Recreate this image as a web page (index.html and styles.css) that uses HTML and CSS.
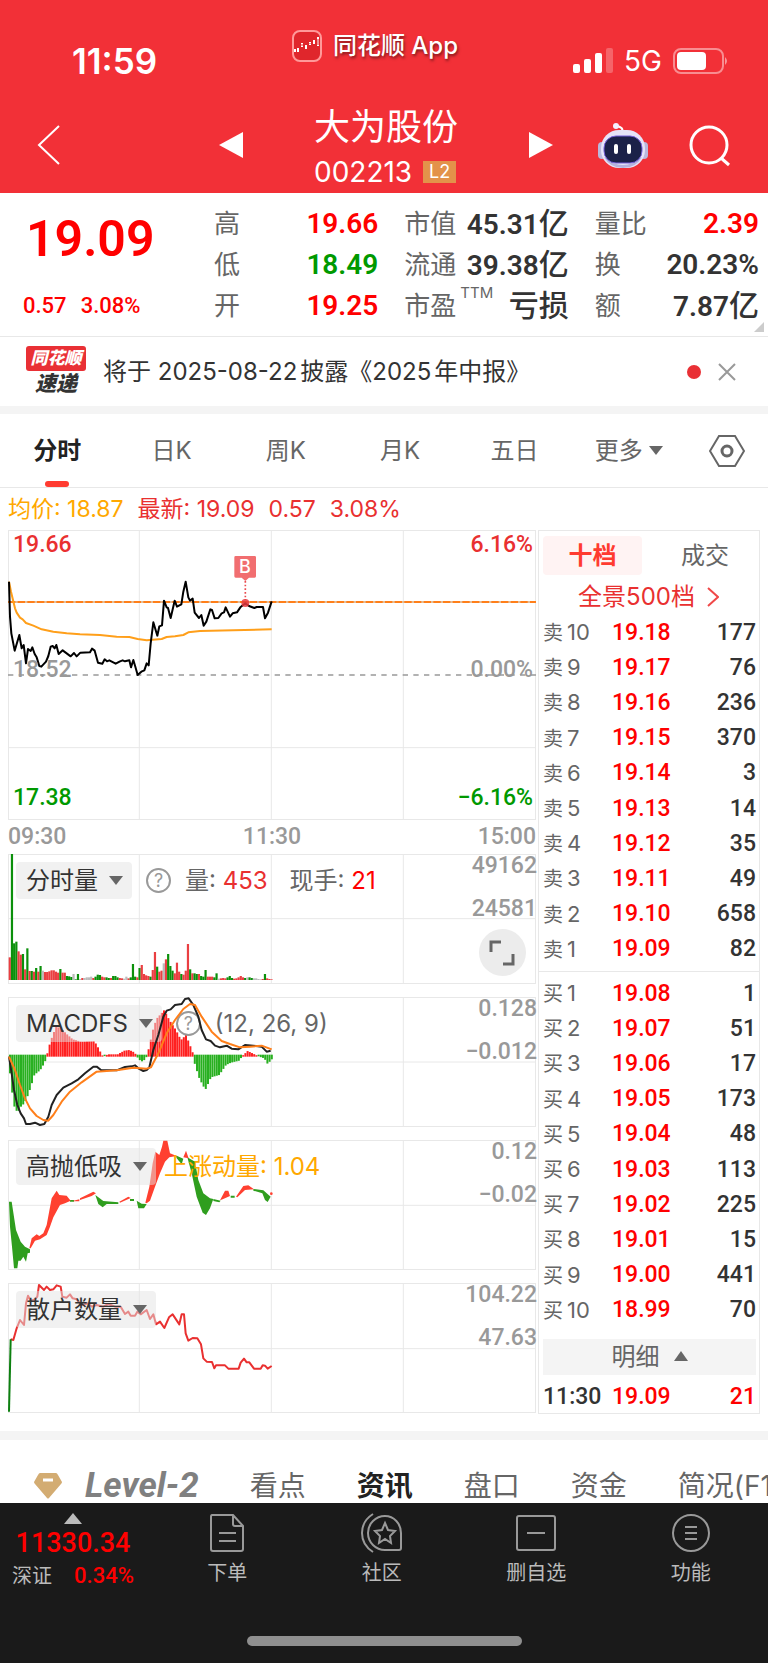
FILE: index.html
```
<!DOCTYPE html>
<html lang="zh-CN">
<head>
    <meta charset="UTF-8">
    <meta name="viewport" content="width=device-width, initial-scale=1.0">
    <title>大为股份 002213</title>
    <link rel="stylesheet" href="styles.css">
</head>
<body>
    <header class="top">
        <div class="status">
            <div class="clock">11:59</div>
            <div class="app-name">
                <svg width="30" height="32" viewBox="0 0 30 32">
                    <rect x="1" y="1" width="28" height="30" rx="7" fill="#e0262c" stroke="#f99" stroke-width="2"/>
                    <path d="M3 19v3M6 18v4M10 13v4M14 15v4M18 12v3M22 10v4M26 7v9" stroke="#fff" stroke-width="2"/>
                    <path d="M10 14v2M18 13v1M26 9v6" stroke="#e0262c" stroke-width="1"/>
                </svg>
                <span>同花顺 App</span>
            </div>
            <div class="signal">
                <svg width="40" height="26" viewBox="0 0 40 26">
                    <rect x="0" y="16" width="7" height="9" rx="2" fill="#fff"/>
                    <rect x="11" y="11" width="7" height="14" rx="2" fill="#fff"/>
                    <rect x="22" y="5" width="7" height="20" rx="2" fill="#fff"/>
                    <rect x="33" y="0" width="7" height="25" rx="2" fill="#fff" opacity=".25"/>
                </svg>
                <span>5G</span>
                <svg width="56" height="26" viewBox="0 0 56 26">
                    <rect x="1" y="1" width="49" height="24" rx="7" fill="none" stroke="#fff" stroke-width="2" opacity=".45"/>
                    <rect x="4" y="4" width="29" height="18" rx="4" fill="#fff"/>
                    <path d="M52 9q4 4 0 8z" fill="#fff" opacity=".5"/>
                </svg>
            </div>
        </div>
        <nav class="nav">
            <div class="nav-left">
                <button class="icon-btn" aria-label="返回">
                    <svg width="24" height="42" viewBox="0 0 24 42"><path d="M22 2L2 21L22 40" fill="none" stroke="#fff" stroke-width="2"/></svg>
                </button>
            </div>
            <div class="nav-mid">
                <button class="icon-btn" aria-label="上一只">
                    <svg width="24" height="26" viewBox="0 0 24 26"><path d="M24 0v26L0 13z" fill="#fff"/></svg>
                </button>
                <div class="stock">
                    <h1>大为股份</h1>
                    <p>002213 <span class="l2">L2</span></p>
                </div>
                <button class="icon-btn" aria-label="下一只">
                    <svg width="24" height="26" viewBox="0 0 24 26"><path d="M0 0v26l24-13z" fill="#fff"/></svg>
                </button>
            </div>
            <div class="nav-right">
                <button class="icon-btn" aria-label="智能助手">
                    <svg width="50" height="46" viewBox="0 0 50 46">
                        <path d="M24 9q2-5-6-6" fill="none" stroke="#fff" stroke-width="2"/>
                        <circle cx="18" cy="3" r="3" fill="#f4f0ff"/>
                        <rect x="0" y="19" width="8" height="17" rx="4" fill="#b9b8dc"/>
                        <rect x="42" y="19" width="8" height="17" rx="4" fill="#b9b8dc"/>
                        <rect x="3" y="7" width="44" height="38" rx="18" fill="#e6e4f8"/>
                        <path d="M6 34q19 16 38 0q-6 11-19 11T6 34z" fill="#b5b2dd"/>
                        <rect x="6" y="13" width="38" height="27" rx="12" fill="#1b2148" stroke="#7560d8" stroke-width="1"/>
                        <rect x="16" y="21" width="4" height="10" rx="2" fill="#fff"/>
                        <rect x="29" y="21" width="4" height="10" rx="2" fill="#fff"/>
                    </svg>
                </button>
                <button class="icon-btn" aria-label="搜索">
                    <svg width="42" height="42" viewBox="0 0 42 42"><circle cx="20" cy="20" r="18" fill="none" stroke="#fff" stroke-width="3"/><path d="M32 33l8 7" stroke="#fff" stroke-width="3"/></svg>
                </button>
            </div>
        </nav>
    </header>

    <section class="quote">
        <div class="price">
            <div class="last">19.09</div>
            <div class="change"><span>0.57</span><span>3.08%</span></div>
        </div>
        <dl class="stats">
            <div><dt>高</dt><dd class="up">19.66</dd></div>
            <div><dt>市值</dt><dd>45.31<i>亿</i></dd></div>
            <div><dt>量比</dt><dd class="up">2.39</dd></div>
            <div><dt>低</dt><dd class="down">18.49</dd></div>
            <div><dt>流通</dt><dd>39.38<i>亿</i></dd></div>
            <div><dt>换</dt><dd>20.23%</dd></div>
            <div><dt>开</dt><dd class="up">19.25</dd></div>
            <div><dt>市盈<sup>TTM</sup></dt><dd><i>亏损</i></dd></div>
            <div><dt>额</dt><dd>7.87<i>亿</i></dd></div>
        </dl>
        <span class="corner"></span>
    </section>

    <section class="news">
        <div class="news-logo"><b>同花顺</b><em>速递</em></div>
        <a href="#" class="news-text">将于 2025-08-22披露《2025年中报》</a>
        <span class="dot"></span>
        <button class="icon-btn" aria-label="关闭">
            <svg width="18" height="18" viewBox="0 0 18 18"><path d="M1 1l16 16M17 1L1 17" stroke="#999" stroke-width="2"/></svg>
        </button>
    </section>

    <nav class="periods">
        <button class="active">分时</button>
        <button>日K</button>
        <button>周K</button>
        <button>月K</button>
        <button>五日</button>
        <button>更多<span class="caret"></span></button>
        <button aria-label="设置">
            <svg width="36" height="32" viewBox="0 0 36 32"><path d="M10 1h16l9 15l-9 15H10L1 16z" fill="none" stroke="#666" stroke-width="2"/><circle cx="18" cy="16" r="5" fill="none" stroke="#666" stroke-width="3"/></svg>
        </button>
    </nav>

    <div class="summary">
        <span class="avg">均价: 18.87</span>
        <span>最新: 19.09</span>
        <span>0.57</span>
        <span>3.08%</span>
    </div>

    <main class="market">
        <div class="charts">
            <figure class="chart main-chart">
                <svg viewBox="24 30 1584 870" preserveAspectRatio="none">
                    <path class="grid" d="M418 30V900M814 30V900M1210 30V900M24 683H1608"/>
                    <path d="M24 465H1608" stroke="#999" stroke-width="4" stroke-dasharray="16 16"/>
                    <path d="M24 246H1608" stroke="#d9a878" stroke-width="4"/>
                    <path d="M24 246H1608" stroke="#ff7f1a" stroke-width="6" stroke-dasharray="22 7"/>
                    <polyline class="line" stroke="#ff9f1a" points="27,185 33,215 45,265 50,278 60,293 68,298 78,309 100,317 125,328 160,335 200,340 240,343 300,345 350,350 388,351 413,357 440,361 485,357 500,351 525,349 550,345 565,337 600,333 700,331 815,328"/>
                    <polyline class="line" stroke="#000" points="27,185 30,290 34,340 44,392 58,345 65,385 71,375 78,430 84,387 92,393 97,382 104,402 110,412 118,438 124,440 138,425 145,408 152,380 158,378 164,385 169,375 176,402 188,391 200,400 212,409 222,399 230,409 241,398 270,397 276,386 284,392 294,428 307,431 314,418 321,424 328,421 347,431 360,424 368,421 375,424 388,421 393,442 400,420 406,440 413,465 424,455 433,451 440,430 446,436 452,370 460,307 472,347 478,319 486,316 492,242 500,262 504,264 512,294 524,242 531,260 544,253 550,215 557,185 565,232 570,242 578,236 584,278 597,294 604,285 611,317 619,305 631,268 636,270 644,295 655,294 665,280 672,277 677,262 690,290 698,280 711,277 721,262 736,250 747,258 763,264 770,261 789,261 795,295 804,278 815,244"/>
                    <path d="M736 183V240" stroke="#ea4b4f" stroke-width="5" stroke-dasharray="5 6"/>
                    <circle cx="736" cy="249" r="12" fill="#e83a3f" opacity=".85"/>
                    <path d="M707 108h57q4 0 4 4v57q0 4-4 4h-17l-11 10l-11-10h-18q-4 0-4-4v-57q0-4 4-4z" fill="#f16e70"/>
                    <text x="735" y="159" text-anchor="middle" class="mark">B</text>
                </svg>
                <span class="tag top-left up-soft">19.66</span>
                <span class="tag top-right up-soft">6.16%</span>
                <span class="tag mid-left">18.52</span>
                <span class="tag mid-right">0.00%</span>
                <span class="tag low-left down">17.38</span>
                <span class="tag low-right down">−6.16%</span>
            </figure>
            <div class="times"><span>09:30</span><span>11:30</span><span>15:00</span></div>

            <figure class="chart sub">
                <svg viewBox="24 42 1584 390" preserveAspectRatio="none">
                    <path class="grid" d="M418 42V432M814 42V432M1210 42V432M24 236H1608"/>
                    <g id="volume"></g>
                </svg>
                <figcaption>
                    <button class="chip">分时量<span class="caret"></span></button>
                    <span class="help">?</span>
                    <span class="cap">量: <b class="up-soft">453</b></span>
                    <span class="cap wide">现手: <b class="up">21</b></span>
                </figcaption>
                <span class="scale">49162</span>
                <span class="scale half">24581</span>
                <button class="expand" aria-label="全屏">
                    <svg width="26" height="26" viewBox="0 0 26 26"><path d="M12 2H2V12M14 24H24V14" fill="none" stroke="#666" stroke-width="3"/></svg>
                </button>
            </figure>

            <figure class="chart sub">
                <svg viewBox="24 471 1584 390" preserveAspectRatio="none">
                    <path class="grid" d="M418 471V861M814 471V861M1210 471V861M24 666H1608"/>
                    <g id="macd"></g>
                </svg>
                <figcaption>
                    <button class="chip">MACDFS<span class="caret"></span></button>
                    <span class="help">?</span>
                    <span class="cap">(12, 26, 9)</span>
                </figcaption>
                <svg class="over" viewBox="24 471 1584 390" preserveAspectRatio="none">
                    <polyline class="line" stroke="#222" points="27,650 35,700 42,750 52,795 62,820 72,835 78,852 90,852 105,848 120,855 133,852 145,830 155,795 170,765 190,743 215,730 235,718 255,700 280,680 290,680 303,690 350,691 375,681 395,679 405,676 415,685 430,693 440,690 448,682 460,630 475,585 490,530 500,512 512,508 525,495 545,492 555,477 566,475 580,495 595,530 605,570 618,598 632,603 645,617 660,622 680,617 695,626 715,628 735,615 760,617 785,620 800,635 812,632"/>
                    <polyline class="line" stroke="#ff7f1a" points="27,650 45,690 60,735 75,775 90,805 110,828 130,840 145,842 160,825 185,785 210,755 245,727 290,695 350,691 400,683 440,686 453,682 475,640 500,580 525,540 550,507 570,492 585,495 605,530 635,575 665,603 690,612 720,622 750,620 785,617 815,628"/>
                </svg>
                <span class="scale">0.128</span>
                <span class="scale half">−0.012</span>
            </figure>

            <figure class="chart sub">
                <svg viewBox="24 30 1584 390" preserveAspectRatio="none">
                    <path class="grid" d="M418 30V420M814 30V420M1210 30V420M24 226H1608"/>
                    <g fill="#2f9e1e">
                        <path d="M27 215H35L48 300L62 335L75 350L90 358V368L83 370L78 395L70 380L62 392L55 392L52 415H42L36 350L30 290z"/>
                        <path d="M286 195L310 213L355 217V222H320L308 232L295 222z"/>
                        <path d="M410 212L425 221L440 222L432 235H415z"/>
                        <path d="M525 75L550 86L545 103L530 85z"/>
                        <path d="M562 82L585 95L595 150L610 190L630 205L640 207L630 235L618 255L608 248L590 200L575 130z"/>
                        <path d="M640 207L662 212L658 217L640 213zM692 197H704V203H692zM210 210H222V215H210zM390 207H402V213H390z"/>
                        <path d="M760 177L790 181L812 200L803 216L795 210L787 190L760 182z"/>
                    </g>
                    <g fill="#ff4030">
                        <path d="M88 355L95 325L110 313L118 318L130 310L140 285L155 205L170 182L178 195L200 197L212 212L195 220L180 225L160 262L150 290L140 315L120 328L105 332L92 355z"/>
                        <path d="M220 212L238 208V214H220zM240 205L280 185L288 190L275 198L240 210z"/>
                        <path d="M358 215L385 200L392 204L360 218z"/>
                        <path d="M436 218L448 170L458 100L466 65L478 75L486 50L490 32H502L510 70L530 78L508 82L495 95L480 130L465 170L450 212L440 220z"/>
                        <path d="M550 82L558 62L566 85zM660 211L675 182H685L690 198L668 208z"/>
                        <path d="M708 200L730 168L745 166L762 178L735 180L712 202z"/>
                        <circle cx="814" cy="191" r="4"/>
                    </g>
                </svg>
                <figcaption>
                    <button class="chip">高抛低吸<span class="caret"></span></button>
                    <span class="cap avg tight">上涨动量: 1.04</span>
                </figcaption>
                <span class="scale">0.12</span>
                <span class="scale half">−0.02</span>
            </figure>

            <figure class="chart sub">
                <svg viewBox="24 459 1584 390" preserveAspectRatio="none">
                    <path class="grid" d="M418 459V849M814 459V849M1210 459V849M24 656H1608"/>
                    <polyline class="line" stroke="#e93030" points="32,628 40,630 50,595 60,570 72,585 78,520 84,497 92,512 105,508 112,500 117,465 132,480 140,470 150,480 160,478 170,466 182,470 187,500 200,503 210,493 218,505 230,508 245,525 265,520 275,530 290,525 310,530 325,522 345,530 362,530 375,552 385,545 392,557 405,557 412,545 422,553 440,540 450,567 460,553 468,583 480,575 493,594 507,562 518,553 538,583 545,553 552,553 557,610 565,632 578,624 592,625 603,643 610,685 620,695 636,696 643,715 648,706 675,706 685,716 716,716 722,698 732,686 740,697 748,697 762,716 782,716 788,706 795,707 803,716 815,708"/>
                    <path class="line" stroke="#0d8010" d="M27 845L32 628"/>
                </svg>
                <figcaption>
                    <button class="chip">散户数量<span class="caret"></span></button>
                </figcaption>
                <span class="scale">104.22</span>
                <span class="scale half">47.63</span>
            </figure>
        </div>

        <aside class="book">
            <div class="book-tabs">
                <button class="active">十档</button>
                <button>成交</button>
            </div>
            <a href="#" class="depth">全景500档
                <svg width="12" height="20" viewBox="0 0 12 20"><path d="M1 1l10 9l-10 9" fill="none" stroke="#f04848" stroke-width="2"/></svg>
            </a>
            <table>
                <tr><th>卖<span>10</span></th><td>19.18</td><td>177</td></tr>
                <tr><th>卖<span>9</span></th><td>19.17</td><td>76</td></tr>
                <tr><th>卖<span>8</span></th><td>19.16</td><td>236</td></tr>
                <tr><th>卖<span>7</span></th><td>19.15</td><td>370</td></tr>
                <tr><th>卖<span>6</span></th><td>19.14</td><td>3</td></tr>
                <tr><th>卖<span>5</span></th><td>19.13</td><td>14</td></tr>
                <tr><th>卖<span>4</span></th><td>19.12</td><td>35</td></tr>
                <tr><th>卖<span>3</span></th><td>19.11</td><td>49</td></tr>
                <tr><th>卖<span>2</span></th><td>19.10</td><td>658</td></tr>
                <tr><th>卖<span>1</span></th><td>19.09</td><td>82</td></tr>
            </table>
            <hr>
            <table>
                <tr><th>买<span>1</span></th><td>19.08</td><td>1</td></tr>
                <tr><th>买<span>2</span></th><td>19.07</td><td>51</td></tr>
                <tr><th>买<span>3</span></th><td>19.06</td><td>17</td></tr>
                <tr><th>买<span>4</span></th><td>19.05</td><td>173</td></tr>
                <tr><th>买<span>5</span></th><td>19.04</td><td>48</td></tr>
                <tr><th>买<span>6</span></th><td>19.03</td><td>113</td></tr>
                <tr><th>买<span>7</span></th><td>19.02</td><td>225</td></tr>
                <tr><th>买<span>8</span></th><td>19.01</td><td>15</td></tr>
                <tr><th>买<span>9</span></th><td>19.00</td><td>441</td></tr>
                <tr><th>买<span>10</span></th><td>18.99</td><td>70</td></tr>
            </table>
            <button class="detail">明细<span class="caret rise"></span></button>
            <div class="tick"><span>11:30</span><span class="up">19.09</span><span class="up">21</span></div>
        </aside>
    </main>

    <nav class="sections">
        <a href="#" class="level">
            <svg width="28" height="26" viewBox="0 0 28 26"><path d="M6 0h16q1 0 2 2l4 7q0 1-1 2L15 25q-1 1-2 0L1 11q-1-1-1-2l4-7q1-2 2-2z" fill="#d3ac72"/><path d="M9 7h10" stroke="#fff" stroke-width="3"/></svg>
            <span>Level-2</span>
        </a>
        <a href="#">看点</a>
        <a href="#" class="active">资讯</a>
        <a href="#">盘口</a>
        <a href="#">资金</a>
        <a href="#">简况(F10)</a>
    </nav>

    <footer class="bottom">
        <div class="bar">
            <div class="index">
                <span class="caret rise"></span>
                <strong>11330.34</strong>
                <div><span>深证</span><b>0.34%</b></div>
            </div>
            <button>
                <svg width="36" height="40" viewBox="0 0 36 40"><path d="M3 2H24L34 13V36q0 2-2 2H4q-2 0-2-2V4q0-2 1-2zM24 2V11q0 2 2 2H34M10 20H27M10 28H27"/></svg>
                下单
            </button>
            <button>
                <svg width="42" height="40" viewBox="0 0 42 40"><path d="M24 3A17 17 0 0 0 24 37H38q2 0 2-2V20A16 17 0 0 0 24 3zM12 1Q1 8 1 20T12 39M24 10l3 7l7 1l-5 5l1 7l-6-4l-6 4l1-7l-5-5l7-1z"/></svg>
                社区
            </button>
            <button>
                <svg width="40" height="40" viewBox="0 0 40 40"><rect x="1" y="3" width="38" height="34" rx="2"/><path d="M11 20H29"/></svg>
                删自选
            </button>
            <button>
                <svg width="40" height="40" viewBox="0 0 40 40"><circle cx="20" cy="20" r="18"/><path d="M14 14H26M14 20H26M14 26H26"/></svg>
                功能
            </button>
        </div>
        <div class="home"></div>
    </footer>
    <script src="script.js"></script>
</body>
</html>
```
FILE: styles.css
```
:root {
    --num: Roboto, "Noto Sans CJK SC", sans-serif;
    --line: #e8e8e8;
}

* {
    box-sizing: border-box;
}

body {
    margin: 0;
    background-color: #fff;
    color: #333;
    font-family: Inter, "Noto Sans CJK SC", sans-serif;
    font-size: 24px;
    line-height: 36px;
    overflow-x: hidden;
}

button {
    border: 0;
    padding: 0;
    background: none;
    color: inherit;
    font: inherit;
    white-space: nowrap;
}

a {
    color: inherit;
    text-decoration: none;
}

svg {
    display: block;
}

h1, p, dl, dd, figure {
    margin: 0;
}

i {
    font-style: normal;
}

.icon-btn {
    display: flex;
}

.up { color: #f00; }
.up-soft { color: #e93030; }
.down { color: #090; }
.avg { color: #ffa800; }

/* header */
.top {
    background-color: #f23037;
    color: #fff;
}

.status {
    display: grid;
    grid-template-columns: 1fr auto 1fr;
    height: 96px;
    padding: 28px 39px 0;
}

.clock {
    padding: 15px 0 0 33px;
    font-size: 35px;
    font-weight: 600;
}

.app-name {
    display: flex;
    gap: 11px;
    height: 36px;
    align-items: center;
    padding-right: 18px;
    font-weight: 500;
    text-shadow: 1px 2px 3px rgba(0, 0, 0, 0.5);
}

.signal {
    display: flex;
    justify-content: flex-end;
    align-items: center;
    gap: 11px;
    height: 36px;
    margin-top: 15px;
    font-size: 28px;
}

.nav {
    display: grid;
    grid-template-columns: 1fr 334px 1fr;
    align-items: center;
    height: 97px;
    padding-left: 4px;
}

.nav-left {
    padding-left: 33px;
}

.nav-mid {
    display: flex;
    justify-content: space-between;
    align-items: center;
}

.stock h1 {
    margin-bottom: 4px;
    font-size: 36px;
    font-weight: 400;
    line-height: 50px;
    text-align: center;
}

.stock p {
    display: flex;
    align-items: center;
    gap: 11px;
    font-size: 28px;
    line-height: 32px;
}

.l2 {
    width: 33px;
    background-color: #e3924a;
    font-size: 18px;
    line-height: 22px;
    text-align: center;
}

.nav-right {
    display: flex;
    justify-content: space-between;
    align-items: center;
    padding: 2px 37px 0 45px;
}

/* quote */
.quote {
    position: relative;
    display: flex;
    height: 144px;
    border-bottom: 1px solid var(--line);
    font-family: var(--num);
}

.price {
    width: 214px;
    color: #f00;
    font-weight: 600;
}

.last {
    padding: 14px 0 0 26px;
    font-size: 50px;
    line-height: 64px;
}

.change {
    display: flex;
    gap: 14px;
    padding: 17px 0 0 23px;
    font-size: 22px;
    font-weight: 500;
    line-height: 36px;
}

.stats {
    flex: 1;
    display: grid;
    grid-template-columns: repeat(3, 1fr);
    grid-auto-rows: 41px;
    column-gap: 26px;
    padding: 10px 9px 0 0;
}

.stats div {
    display: flex;
    justify-content: space-between;
    line-height: 41px;
}

.stats dt {
    color: #666;
    font-family: Inter, "Noto Sans CJK SC", sans-serif;
    font-size: 26px;
    white-space: nowrap;
}

.stats sup {
    position: absolute;
    margin: 0 0 0 4px;
    font-size: 15px;
    line-height: 16px;
}

.stats dd {
    font-size: 28px;
    font-weight: 600;
    white-space: nowrap;
}

.stats i {
    font-size: 30px;
    font-weight: 500;
}

.corner {
    position: absolute;
    right: 4px;
    bottom: 4px;
    border: 5px solid transparent;
    border-right-color: #ccc;
    border-bottom-color: #ccc;
}

/* news line */
.news {
    display: flex;
    align-items: center;
    height: 69px;
    padding: 0 32px 0 26px;
}

.news-logo {
    width: 60px;
    margin-right: 17px;
    text-align: center;
    font-style: italic;
    font-weight: 900;
}

.news-logo b {
    display: block;
    border-radius: 3px;
    background-color: #e93035;
    color: #fff;
    font-size: 17px;
    line-height: 25px;
}

.news-logo em {
    display: block;
    font-size: 21px;
    line-height: 26px;
}

.news-text {
    flex: 1;
    white-space: nowrap;
    text-autospace: normal;
}

.dot {
    width: 14px;
    height: 14px;
    margin-right: 17px;
    border-radius: 50%;
    background-color: #e93035;
}

/* period tabs */
.periods {
    display: grid;
    grid-template-columns: repeat(6, 1fr) 82px;
    align-items: center;
    height: 82px;
    border-top: 8px solid #f4f4f4;
    border-bottom: 1px solid var(--line);
    color: #666;
}

.periods button {
    position: relative;
    display: flex;
    justify-content: center;
    align-items: center;
}

.periods .active {
    color: #222;
    font-weight: 700;
}

.periods .active::after {
    content: "";
    position: absolute;
    left: calc(50% - 12px);
    bottom: -18px;
    width: 24px;
    height: 6px;
    border-radius: 3px;
    background-color: #ff3b30;
}

.caret {
    display: inline-block;
    margin-left: 6px;
    border: 7px solid transparent;
    border-top: 9px solid #666;
    border-bottom: 0;
}

.caret.rise {
    border-top: 0;
    border-bottom: 10px solid #666;
}

.summary {
    display: flex;
    gap: 14px;
    height: 42px;
    padding-left: 8px;
    color: #e93030;
    font-size: 23px;
    line-height: 42px;
}

/* charts */
.market {
    display: flex;
    gap: 2px;
    padding: 0 8px 17px;
}

.charts {
    flex: 1;
}

.chart {
    position: relative;
    box-shadow: inset 0 0 0 1px var(--line);
}

.chart > svg {
    width: 100%;
    height: 100%;
}

.chart .over {
    position: absolute;
    inset: 0;
}

.main-chart {
    height: 290px;
}

.grid {
    stroke: #e8e8e8;
    stroke-width: 3;
}

.line {
    fill: none;
    stroke-width: 6;
    stroke-linejoin: round;
}

.mark {
    fill: #fff;
    font-size: 54px;
    font-weight: 500;
}

.tag, .scale, .times {
    color: #999;
    font-family: var(--num);
    font-size: 23px;
    font-weight: 500;
    line-height: 26px;
}

.tag.up-soft { color: #e93030; }
.tag.down { color: #090; }

.tag {
    position: absolute;
}

.top-left, .mid-left, .low-left { left: 5px; }
.top-right, .mid-right, .low-right { right: 3px; }
.top-left, .top-right { top: 2px; }
.mid-left, .mid-right { top: 127px; }
.low-left, .low-right { bottom: 9px; }

.times {
    display: flex;
    justify-content: space-between;
    height: 34px;
    line-height: 33px;
}

.sub {
    height: 130px;
    margin-bottom: 13px;
}

.sub:last-child {
    margin-bottom: 0;
}

.sub figcaption {
    position: absolute;
    left: 8px;
    top: 8px;
    display: flex;
    align-items: center;
    color: #666;
}

.chip {
    display: flex;
    align-items: center;
    height: 37px;
    padding: 0 9px 0 10px;
    border-radius: 4px;
    background-color: rgba(227, 227, 227, 0.5);
    color: #333;
}

.chip .caret {
    margin-left: 11px;
}

.help {
    width: 25px;
    height: 25px;
    margin-left: 14px;
    border: 2px solid #999;
    border-radius: 50%;
    color: #999;
    font-size: 18px;
    line-height: 21px;
    text-align: center;
}

.cap {
    margin-left: 14px;
    white-space: nowrap;
}

.cap b {
    font-weight: 400;
}

.cap.wide {
    margin-left: 22px;
}

.cap.tight {
    margin-left: 8px;
}

.cap.avg {
    color: #ffa800;
}

.scale {
    position: absolute;
    right: -1px;
    top: -1px;
}

.scale.half {
    top: 42px;
}

.expand {
    position: absolute;
    right: 10px;
    bottom: 8px;
    width: 47px;
    height: 47px;
    padding: 10px;
    border-radius: 50%;
    background-color: #ececec;
}

/* order book */
.book {
    width: 222px;
    padding: 5px 3px 0 4px;
    border: 1px solid var(--line);
}

.book-tabs {
    display: grid;
    grid-template-columns: 99px 1fr;
    column-gap: 12px;
    color: #666;
}

.book-tabs button {
    height: 39px;
    border-radius: 4px;
}

.book-tabs .active {
    background-color: #fff3f3;
    color: #ff3b30;
    font-weight: 700;
}

.depth {
    display: flex;
    justify-content: center;
    align-items: center;
    gap: 12px;
    height: 40px;
    padding: 3px 2px 0 0;
    color: #e93030;
}

.book table {
    width: 100%;
    height: 352px;
    border-collapse: collapse;
    table-layout: fixed;
}

.book th, .book td {
    padding: 0;
    line-height: 30px;
}

.book th {
    width: 69px;
    color: #666;
    font-size: 20px;
    font-weight: 400;
    text-align: left;
}

.book th span {
    margin-left: 4px;
    font-size: 22px;
}

.book td {
    color: #f00;
    font-family: var(--num);
    font-size: 23px;
    font-weight: 500;
}

.book td:last-child {
    color: #333;
    text-align: right;
}

.book hr {
    margin: 4px -3px 4px -4px;
    border: 0;
    border-top: 1px solid var(--line);
}

.detail {
    width: 100%;
    height: 36px;
    margin-top: 11px;
    background-color: #f4f4f4;
    color: #666;
}

.detail .caret {
    margin: 0 0 4px 14px;
}

.tick {
    display: grid;
    grid-template-columns: 69px 1fr auto;
    height: 38px;
    font-family: var(--num);
    font-size: 23px;
    font-weight: 500;
    line-height: 43px;
}

/* section tabs */
.sections {
    display: flex;
    gap: 51px;
    height: 72px;
    padding: 19px 0 0 34px;
    border-top: 9px solid #f4f4f4;
    color: #666;
    font-size: 28px;
    line-height: 54px;
    white-space: nowrap;
    overflow: hidden;
}

.sections .active {
    color: #222;
    font-weight: 700;
}

.level {
    display: flex;
    align-items: center;
    gap: 23px;
    height: 54px;
    color: #808080;
    font-family: Roboto, sans-serif;
    font-size: 35px;
    font-style: italic;
    font-weight: 700;
}

/* bottom bar */
.bottom {
    height: 160px;
    background-color: #1a1a1a;
    color: #bbb;
}

.bar {
    display: grid;
    grid-template-columns: 150px repeat(4, 1fr);
    height: 133px;
    padding-top: 10px;
}

.bar button {
    display: flex;
    flex-direction: column;
    align-items: center;
    height: 78px;
    gap: 5px;
    font-size: 20px;
    line-height: 30px;
}

.bar button svg {
    fill: none;
    stroke: #999;
    stroke-width: 2;
}

.index {
    display: flex;
    flex-direction: column;
    align-items: center;
    padding-right: 4px;
    font-size: 20px;
}

.index .caret {
    margin: 0;
    border-width: 0 9px 11px;
    border-bottom-color: #bbb;
}

.index strong {
    color: #f00;
    font-family: var(--num);
    font-size: 27px;
    font-weight: 500;
    line-height: 38px;
}

.index div {
    display: flex;
    gap: 22px;
    line-height: 28px;
}

.index b {
    color: #f00;
    font-family: var(--num);
    font-size: 22px;
    font-weight: 500;
}

.home {
    width: 275px;
    height: 10px;
    margin: 0 auto;
    border-radius: 5px;
    background-color: #8f8f8f;
}
```
FILE: script.js
```
const NS = 'http://www.w3.org/2000/svg';
const STEP = 6.6; // one minute on the time axis

function addBar(group, x, y, w, h, color) {
    const r = document.createElementNS(NS, 'rect');
    r.setAttribute('x', x);
    r.setAttribute('y', y);
    r.setAttribute('width', w);
    r.setAttribute('height', h);
    r.setAttribute('fill', color);
    group.appendChild(r);
}

// r = up, g = down, a = flat
const colors = { r: '#ea3f42', g: '#0b900b', a: '#bbb' };
const volume = 'r68 g378 g110 g115 r86 r76 g78 r32 g95 r27 g27 r25 g36 r25 g42 a28 r24 r24 r26 r29 r29 r25 r22 g33 r22 r22 g12 g11 g9 a18 g2 g18 a3 r6 a6 a8 a8 a10 r6 g10 g16 g15 r10 r8 g8 g6 r6 g12 g12 g8 r6 r5 a4 a10 r5 g8 g48 g10 r8 g36 r45 r18 r14 r12 g10 r30 r84 g40 r25 r28 a50 r62 g78 g42 g28 r20 r52 r25 g18 r16 r28 r108 g32 r20 g20 g18 r18 g12 g10 g30 r10 r10 r10 g8 g20 a4 r5 r6 r5 g8 g12 g6 r4 r5 r8 r12 r8 g6 a8 g8 g6 a5 a5 a3 a2 r3 g18 r5 r3 r2';
const volumeGroup = document.getElementById('volume');
volume.split(' ').forEach((v, i) => {
    const h = Number(v.slice(1));
    addBar(volumeGroup, 26 + i * STEP, 420 - h, STEP, h, colors[v[0]]);
});

// outline of the histogram, value above or below the zero line
const ZERO = 648;
const outline = [
    [27, 700], [35, 770], [42, 810], [52, 815], [60, 800], [70, 790], [80, 768], [90, 740], [100, 705], [118, 690], [130, 670], [138, 650],
    [140, 633], [150, 600], [165, 560], [180, 565], [195, 580], [215, 598], [240, 605], [280, 603], [290, 620], [303, 645], [308, 650],
    [320, 643], [350, 643], [370, 632], [385, 630], [400, 637], [408, 648], [412, 658], [425, 665], [435, 655],
    [440, 640], [448, 605], [458, 560], [468, 535], [490, 510], [505, 540], [525, 570], [540, 600], [555, 585], [565, 610], [576, 640],
    [582, 675], [595, 715], [613, 750], [630, 712], [655, 705], [675, 675], [690, 668], [715, 662], [724, 648],
    [740, 633], [765, 645], [775, 650], [790, 655], [800, 672], [815, 655]
];
const macdGroup = document.getElementById('macd');
for (let x = 27; x < 815; x += STEP) {
    const k = outline.findIndex(p => p[0] > x);
    const a = outline[k - 1];
    const b = outline[k];
    const y = a[1] + (b[1] - a[1]) * (x - a[0]) / (b[0] - a[0]);
    if (y < ZERO) {
        addBar(macdGroup, x, y, 6, ZERO + 2 - y, '#ff2020');
    } else {
        addBar(macdGroup, x, ZERO - 4, 6, y - ZERO + 4, '#28b020');
    }
}
```
